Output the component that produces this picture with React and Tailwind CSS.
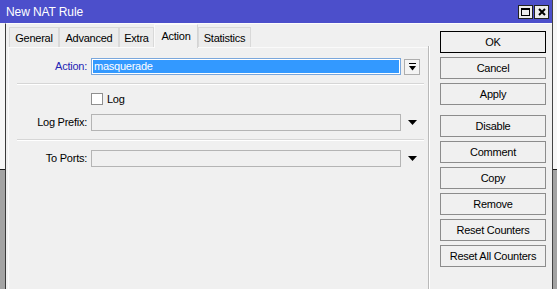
import React from 'react';

const tabs = [
  { label: 'General', w: 'w-[50px]' },
  { label: 'Advanced', w: 'w-[60px]' },
  { label: 'Extra', w: 'w-[35px]' },
  { label: 'Action', w: 'w-[44px]', active: true },
  { label: 'Statistics', w: 'w-[53px]' },
];

const buttons = [
  { label: 'OK', primary: true },
  { label: 'Cancel' },
  { label: 'Apply', gapAfter: true },
  { label: 'Disable' },
  { label: 'Comment' },
  { label: 'Copy' },
  { label: 'Remove' },
  { label: 'Reset Counters' },
  { label: 'Reset All Counters' },
];

const DownArrow = () => (
  <svg width="9" height="5" viewBox="0 0 9 5" className="ml-[7px]">
    <path d="M0 0 H9 L4.5 5 Z" fill="#000" />
  </svg>
);

const App = () => {
  return (
    <div
      className="w-[557px] h-[289px] overflow-hidden flex bg-[linear-gradient(to_bottom,#f6f6f6_169px,#1a1a1a_169px,#1a1a1a_170px,#a3a3a3_170px)] text-[11px] tracking-[-0.25px] text-black"
      style={{ fontFamily: '"Liberation Sans", Arial, sans-serif' }}
    >
      {/* Window */}
      <div className="w-[553px] h-full flex flex-col border-r border-[#444]">
        {/* Title bar */}
        <div className="h-[23px] bg-[#4c4fcb] flex items-center pl-[6px] pr-[3px] shrink-0">
          <span className="text-white text-[12px] tracking-[-0.1px]">New NAT Rule</span>
          <div className="ml-auto flex gap-[1px]">
            <div className="w-[15px] h-[14px] bg-[#ececec] border border-[#222] flex items-center justify-center">
              <div className="w-[9px] h-[8px] border border-black border-t-2" />
            </div>
            <div className="w-[15px] h-[14px] bg-[#ececec] border border-[#222] flex items-center justify-center">
              <svg width="8" height="8" viewBox="0 0 8 8">
                <path d="M1 1 L7 7 M7 1 L1 7" stroke="#000" strokeWidth="2" />
              </svg>
            </div>
          </div>
        </div>

        <div className="flex flex-1">
          {/* Outside strip on the left */}
          <div className="w-[5px] shrink-0" />

          <div className="flex flex-1 bg-[#f0f0f0] border-l border-[#3a3a3a] border-t border-t-[#fdfdfd]">
            {/* Left: tabs and form */}
            <div className="w-[422px] flex flex-col pl-[2px]">
              <div className="h-[24px] flex items-end pl-[1px] border-b border-[#fafafa] shrink-0">
                {tabs.map((t) =>
                  t.active ? (
                    <div
                      key={t.label}
                      className={`${t.w} h-[24px] -mb-[1px] bg-[#f0f0f0] border border-b-0 border-[#d4d4d4] border-t-[#fafafa] border-l-[#fafafa] flex items-start justify-center pt-[3px]`}
                    >
                      {t.label}
                    </div>
                  ) : (
                    <div
                      key={t.label}
                      className={`${t.w} h-[20px] bg-[#ececec] border border-b-0 border-[#d9d9d9] flex items-center justify-center pt-[1px]`}
                    >
                      {t.label}
                    </div>
                  )
                )}
              </div>

              <div className="flex-1 border-l border-[#fafafa] pt-[10px] pr-[2px]">
                {/* Action */}
                <div className="flex items-center h-[17px]">
                  <div className="w-[82px] text-right pr-[4px] text-[#2424b4]">Action:</div>
                  <div className="w-[310px] h-[17px] border border-[#7aa7dc] bg-white p-[1px]">
                    <div className="h-full bg-[#3399ff] text-white leading-[13px] pl-[1px]">masquerade</div>
                  </div>
                  <div className="ml-[3px] w-[16px] h-[16px] border border-[#adadad] bg-[#f4f4f4] flex items-center justify-center">
                    <svg width="7" height="8" viewBox="0 0 7 8">
                      <path d="M0 0.5 H7" stroke="#000" strokeWidth="1" />
                      <path d="M0 3 H7 L3.5 7.5 Z" fill="#000" />
                    </svg>
                  </div>
                </div>

                <div className="ml-[8px] mr-[2px] mt-[8px] border-t border-[#d6d6d6] border-b border-b-white" />

                {/* Log */}
                <div className="flex items-center h-[16px] mt-[6px]">
                  <div className="w-[82px]" />
                  <div className="w-[12px] h-[12px] border border-[#8f8f8f] bg-white" />
                  <span className="ml-[4px]">Log</span>
                </div>

                {/* Log Prefix */}
                <div className="flex items-center h-[17px] mt-[7px]">
                  <div className="w-[82px] text-right pr-[4px]">Log Prefix:</div>
                  <div className="w-[310px] h-[17px] border border-[#b4b4b4] bg-[#f0f0f0]" />
                  <DownArrow />
                </div>

                <div className="ml-[8px] mr-[2px] mt-[8px] border-t border-[#d6d6d6] border-b border-b-white" />

                {/* To Ports */}
                <div className="flex items-center h-[17px] mt-[9px]">
                  <div className="w-[82px] text-right pr-[4px]">To Ports:</div>
                  <div className="w-[310px] h-[17px] border border-[#b4b4b4] bg-[#f0f0f0]" />
                  <DownArrow />
                </div>
              </div>
            </div>

            {/* Separator */}
            <div className="w-[2px] mt-[22px] border-l border-[#b9b9b9] border-r border-r-white" />

            {/* Buttons */}
            <div className="flex flex-col pl-[10px] pt-[7px]">
              {buttons.map((b) => (
                <div
                  key={b.label}
                  className={`w-[106px] h-[22px] flex items-center justify-center bg-[#f0f0f0] border ${
                    b.primary ? 'border-black' : 'border-[#8c8c8c]'
                  } ${b.gapAfter ? 'mb-[10px]' : 'mb-[4px]'}`}
                >
                  {b.label}
                </div>
              ))}
            </div>
          </div>
        </div>
      </div>
    </div>
  );
};

export default App;
